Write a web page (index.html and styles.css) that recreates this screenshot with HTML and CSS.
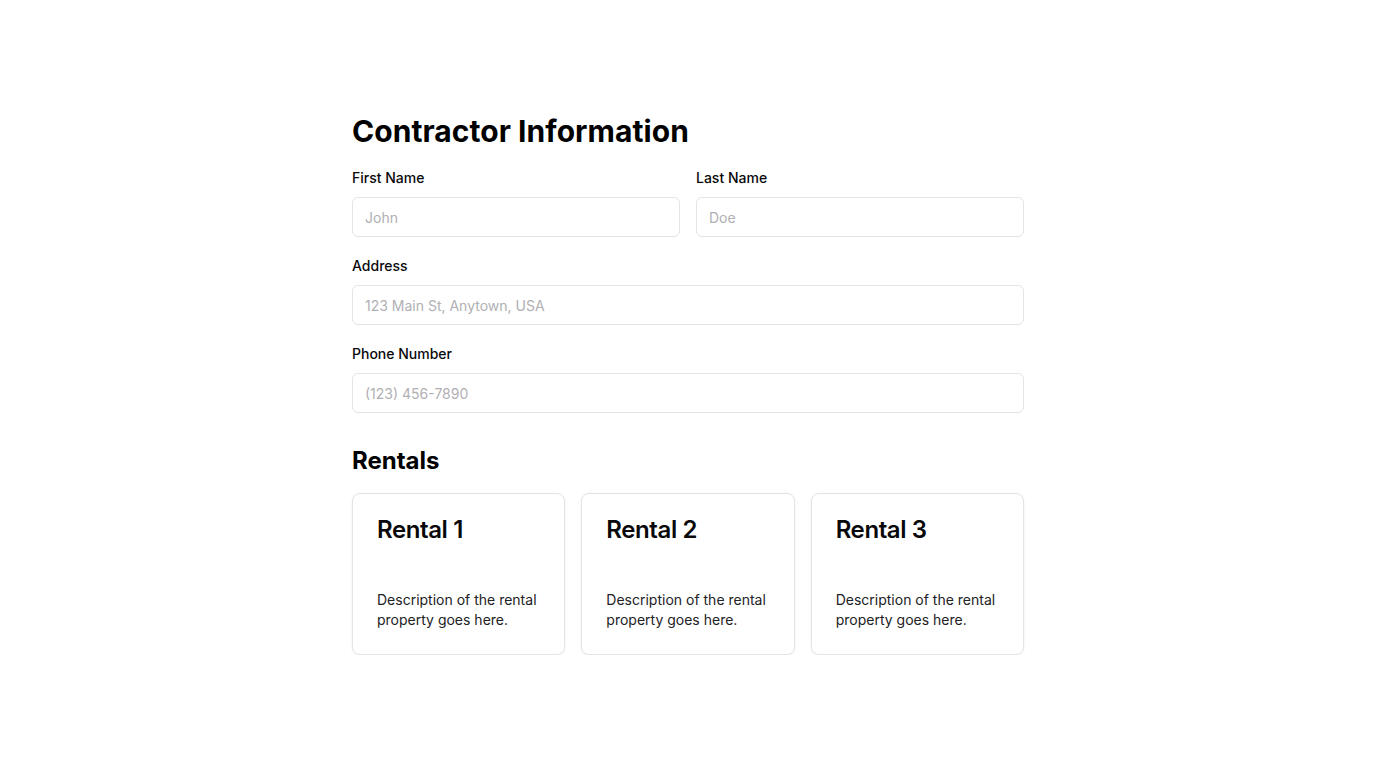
FILE: index.html
```html
<!DOCTYPE html>
<html lang="en">
<head>
<meta charset="utf-8">
<title>Contractor Information</title>
<link rel="stylesheet" href="styles.css">
</head>
<body>
<main class="page">
  <h1 class="title">Contractor Information</h1>
  <form class="form">
    <div class="row">
      <div class="field">
        <label class="label" for="first">First Name</label>
        <input class="input" id="first" type="text" placeholder="John">
      </div>
      <div class="field">
        <label class="label" for="last">Last Name</label>
        <input class="input" id="last" type="text" placeholder="Doe">
      </div>
    </div>
    <div class="field">
      <label class="label" for="address">Address</label>
      <input class="input" id="address" type="text" placeholder="123 Main St, Anytown, USA">
    </div>
    <div class="field">
      <label class="label" for="phone">Phone Number</label>
      <input class="input" id="phone" type="tel" placeholder="(123) 456-7890">
    </div>
  </form>
  <h2 class="subtitle">Rentals</h2>
  <div class="cards">
    <div class="card">
      <div class="card-header"><h3 class="card-title">Rental 1</h3></div>
      <div class="card-content"><p>Description of the rental property goes here.</p></div>
    </div>
    <div class="card">
      <div class="card-header"><h3 class="card-title">Rental 2</h3></div>
      <div class="card-content"><p>Description of the rental property goes here.</p></div>
    </div>
    <div class="card">
      <div class="card-header"><h3 class="card-title">Rental 3</h3></div>
      <div class="card-content"><p>Description of the rental property goes here.</p></div>
    </div>
  </div>
</main>
</body>
</html>
```
FILE: styles.css
```css
* { box-sizing: border-box; }
html, body { margin: 0; padding: 0; background: #ffffff; }
body {
  font-family: Inter, "Noto Sans", "Liberation Sans", sans-serif;
  color: #09090b;
}
.page {
  width: 672px;
  margin: 0 auto;
  padding-top: 113px;
}
.title {
  margin: 0;
  font-size: 30px;
  line-height: 36px;
  font-weight: 700;
  letter-spacing: 0.05px;
  color: #000;
}
.form {
  margin-top: 16px;
  display: flex;
  flex-direction: column;
  gap: 16px;
}
.row {
  display: grid;
  grid-template-columns: 1fr 1fr;
  gap: 16px;
}
.field {
  display: flex;
  flex-direction: column;
  gap: 8px;
}
.label {
  font-size: 14px;
  line-height: 20px;
  padding: 3px 0 1px;
  font-weight: 500;
  color: #09090b;
}
.input {
  height: 40px;
  width: 100%;
  border: 1px solid #e4e4e7;
  border-radius: 6px;
  padding: 0 12px;
  font-family: inherit;
  font-size: 14px;
  color: #09090b;
  background: #fff;
  outline: none;
}
.input::placeholder { color: #b0b0b4; }
.subtitle {
  margin: 32px 0 0;
  font-size: 24px;
  line-height: 32px;
  font-weight: 700;
  color: #000;
}
.cards {
  margin-top: 16px;
  display: grid;
  grid-template-columns: repeat(3, 1fr);
  gap: 16px;
}
.card {
  border: 1px solid #e4e4e7;
  border-radius: 8px;
  background: #fff;
  box-shadow: 0 1px 3px 0 rgba(0, 0, 0, 0.06);
}
.card-header { padding: 24px; }
.card-title {
  margin: 0;
  font-size: 24px;
  line-height: 24px;
  font-weight: 600;
  letter-spacing: -0.4px;
  color: #09090b;
}
.card-content { padding: 24px; }
.card-content p {
  margin: 0;
  font-size: 14px;
  line-height: 20px;
  color: #222225;
}
```
